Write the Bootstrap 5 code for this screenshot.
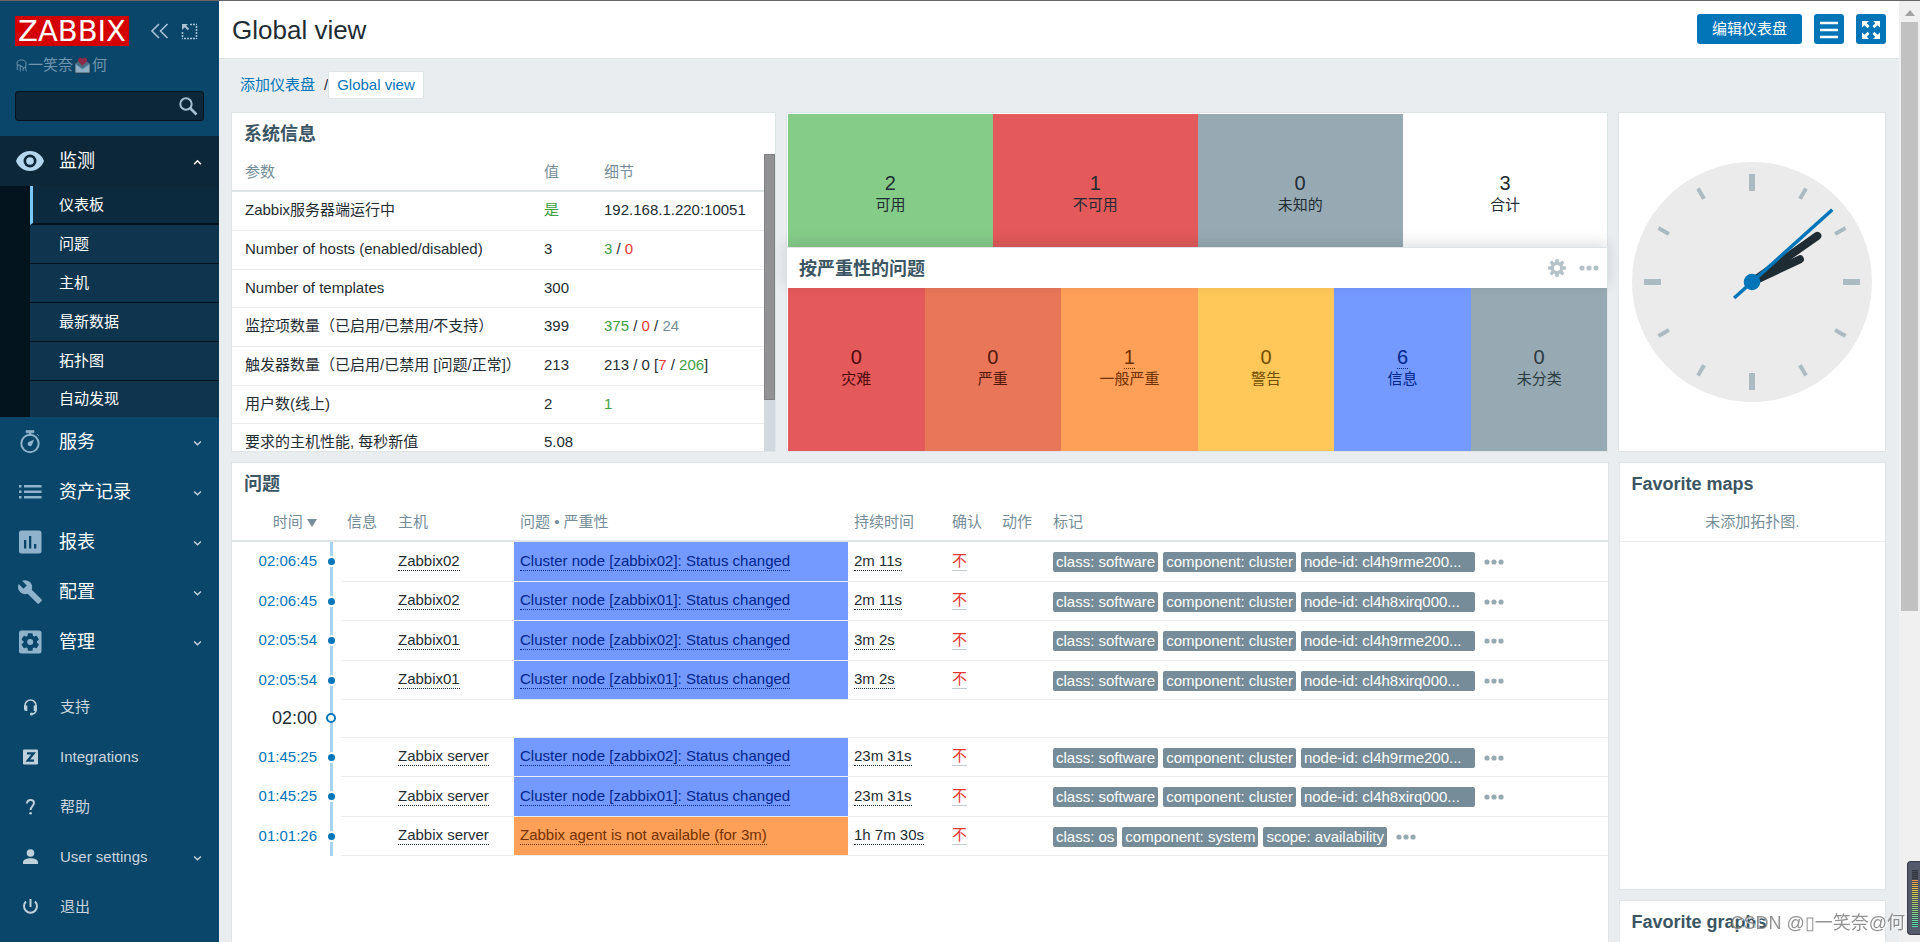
<!DOCTYPE html>
<html lang="zh-CN">
<head>
<meta charset="utf-8">
<meta name="viewport" content="width=device-width, initial-scale=1">
<title>Global view</title>
<link href="https://cdn.jsdelivr.net/npm/bootstrap@5.3.0/dist/css/bootstrap.min.css" rel="stylesheet">
<style>
:root{--ui-blue:#0275b8;--ui-text:#1f2c33;--ui-gray:#768d99;--ui-line:#dfe4e7;--ui-row:#ebeef0}
html,body{height:100%}
body{font-family:"Liberation Sans","Noto Sans CJK SC",sans-serif;font-size:15px;line-height:20px;color:var(--ui-text);background:#e9edf0;overflow:hidden}
a{text-decoration:none;color:var(--ui-blue)}
.frame{height:100vh;border-top:1px solid #666;overflow:hidden}
/* sidebar */
.side{width:219px;background:#0a466a;flex:none}
.side-top{padding:15px 15px 0}
.side-logo{background:#d40000;color:#fff;width:114px;height:30px;font:29px/30px "DejaVu Sans",sans-serif;text-align:center;margin-right:21px}
.side-logo:hover{color:#fff}
.side-name{color:#6f95ae;height:20px;margin-top:9px;padding-left:16px;gap:1px}
.side-find{margin:16px 15px 15px}
.side-search{height:30px;background:#0b2738;border:1px solid #04141f;border-radius:3px;color:#fff;width:100%}
.side-search:focus{background:#0b2738;color:#fff}
.search-btn{right:4px;top:4px;width:22px;height:22px}
.side svg{display:block}
.menu-main a{height:50px;color:#fff;font-size:18px}
.menu-main>li>a.on{background:#0b2738}
.menu-icon{width:59px;padding-left:17px;color:#8fb3cc;flex:none}
.menu-icon.lit{color:#b5d7ee;padding-left:15px}
.chev{margin:2px 17px 0 auto;color:#c5d5e0}
.menu-sub{background:#04141e;padding-left:30px}
.menu-sub a{height:39px;font-size:15px;background:#0f344d;border-bottom:1px solid #04141e;padding-left:29px}
.menu-sub a.on{background:#0b2a3e;border-left:3px solid #7cc7f8;padding-left:26px;border-bottom-width:2px}
.menu-sub li:last-child a{height:36px;border-bottom:0}
.menu-foot{margin:15px 0 0}
.menu-foot a{height:50px;color:#c9d6df}
.menu-foot .menu-icon{width:60px;padding-left:20px;color:#c1d1dc}
/* header */
.top-bar{height:58px;background:#fff;border-bottom:1px solid var(--ui-line);padding:0 13px}
.top-bar h1{font-size:26px;line-height:30px;margin:0}
.top-tools{gap:12px;margin:0 0 1px auto}
.btn-ui{--bs-btn-bg:#0275b8;--bs-btn-color:#fff;--bs-btn-hover-bg:#02659f;--bs-btn-hover-color:#fff;height:30px;border:0;border-radius:3px;padding:0;font-size:15px;line-height:20px}
.btn-edit{width:105px}
.btn-sq{width:30px}
.crumbs{padding:12px 21px 13px}
.crumbs .here{background:#fff;border:1px solid var(--ui-line);border-radius:2px;padding:3px 8px}
.crumbs .sep{margin-left:9px}
/* widgets */
.dash{padding:0 13px 0 12px}
.dash .row{--bs-gutter-x:10px}
.dash .row+.row,.widget+.widget{margin-top:10px}
.widget{background:#fff;border:1px solid var(--ui-line);position:relative}
.h-top{height:340px}
.h-half{height:165px}
.widget-head{height:41px;padding:0 12px;color:#3c5563;font-size:18px;line-height:42px;font-weight:700;margin:0}
.tiles{padding:1px 0 0 1px}
.tiles+.tiles{padding-top:0}
.widget-over{left:-1px;right:-1px;bottom:100%;padding-top:3px;background:#fff;border:1px solid var(--ui-line);border-bottom:0;box-shadow:0 -4px 14px rgba(31,44,51,.15)}
.widget-over h2{font-size:18px;font-weight:700;margin:0}
.tile{flex:1 1 0;min-width:0;text-align:center;padding-bottom:4px}
.tile .num{font-size:20px;line-height:23px}
.tile .num a{color:inherit;border-bottom:1px dotted currentColor}
.c-ok{background:#86cc89}.c-dis{background:#e45959;color:#4e0b0b}.c-high{background:#e97659;color:#52190b}.c-avg{background:#ffa059;color:#733100}.c-warn{background:#ffc859;color:#734d00}.c-info{background:#7499ff;color:#00268e}.c-na{background:#97aab3;color:#2c3a41}
.c-down{background:#e45959;color:var(--ui-text)}.c-unk{background:#97aab3;color:var(--ui-text)}
.green{color:#429e47}.red{color:#e33734}.gray{color:var(--ui-gray)}
.tbl{margin:0;color:inherit;table-layout:fixed;border-collapse:separate;border-spacing:0;width:100%}
.tbl th{font-weight:400;color:var(--ui-gray);padding:0 6px;border-bottom:2px solid var(--ui-line);white-space:nowrap;vertical-align:middle}
.tbl thead tr{height:38px}
.tbl td{padding:0 6px 2px;border-bottom:1px solid var(--ui-row);vertical-align:middle;white-space:nowrap}
.sys-wrap{height:297px;overflow:hidden}
.w-val{width:60px}.w-det{width:166px}
.sys-tbl tbody tr{height:39px}
.sys-tbl tbody tr:nth-child(3n){height:38px}
.sys-tbl th:first-child,.sys-tbl td:first-child{padding-left:13px}
.sys-bar{width:11px;background:#d2dae0;flex:none}
.sys-thumb{height:246px;background:#929294;border:1px solid #808082}
.w-time{width:96px}.w-axis{width:13px}.w-msg{width:51px}.w-host{width:122px}.w-prob{width:334px}.w-dur{width:98px}.w-ack{width:50px}
.prob-tbl tbody tr{height:40px}
.prob-tbl tbody tr:nth-child(even){height:39px}
.prob-tbl tbody tr.hour{height:38px}
.prob-tbl th.t,.prob-tbl td.t{text-align:right;padding-right:11px}
.prob-tbl td.t,.prob-tbl td.ax{border-bottom:0}
.prob-tbl td.tags,.prob-tbl th.tags{padding:0 0 0 7px}
.prob-tbl td.ax{padding:0;position:relative}
.ax-line{position:absolute;left:2px;width:3px;top:0;bottom:0;background:#a8d4ee}
.ax-dot{position:absolute;left:0;top:50%;width:7px;height:7px;margin-top:-4px;border-radius:50%;background:var(--ui-blue);box-shadow:0 0 0 2px #fff}
.hour .ax-dot{left:-2px;width:10px;height:10px;margin-top:-6px;background:#fff;border:2px solid var(--ui-blue);box-shadow:none}
.hour .t{font-size:18px}
.dot-link{color:inherit;border-bottom:1px dotted currentColor;display:inline-block;line-height:18px}
.ack{color:#e33734;border-bottom:1px solid #c0cad0;display:inline-block;line-height:18px}
.tagx{background:var(--ui-gray);color:#fff;border-radius:2px;padding:0 3px;line-height:20px;height:20px;margin-right:5px;display:inline-block;vertical-align:middle;overflow:hidden;text-overflow:ellipsis}
.tag-wide{width:174px}
.more{border:0;background:none;padding:0;margin-left:4px;color:#97aab3;vertical-align:middle}
.more svg{display:block}
.widget-over .more{margin:0;color:#b5c2ca}
.head-tools{gap:12px;margin:0 -4px 3px auto}
.h-map{height:428px}
.h-prob{height:600px}
.empty{height:38px;line-height:36px;text-align:center;color:var(--ui-gray);border-bottom:1px solid var(--ui-row)}
/* right scrollbar and overlays */
.bar{width:21px;background:#f0f0f0;flex:none;padding:0 2px}
.bar-up{height:21px;padding-top:9px}
.bar-thumb{height:589px;background:#c1c1c1}
.meter{position:fixed;right:0;bottom:7px;width:13px;height:74px;background:#565b6c;border:1px solid #3a3d48;border-right:0;border-radius:4px 0 0 4px;padding:8px 2px 7px 4px}
.meter div{height:100%;background:repeating-linear-gradient(to bottom,transparent 0 1px,#454a58 1px 2px),linear-gradient(#33363f 0 16%,#f09050 17%,#e8c840 35%,#a8d070 60%,#50e0b0)}
.stamp{position:fixed;right:15px;bottom:5px;font-size:18px;line-height:28px;color:rgba(110,110,110,.75);text-shadow:1px 1px 0 rgba(255,255,255,.8);white-space:nowrap}
</style>
</head>
<body>
<svg class="d-none" xmlns="http://www.w3.org/2000/svg">
<symbol id="dn" viewBox="0 0 8 6"><path d="M1 1.200l3 3 3-3" fill="none" stroke="currentColor" stroke-width="1.200"/></symbol>
<symbol id="dots" viewBox="0 0 20 6"><g fill="currentColor"><circle cx="3" cy="3" r="2.600"/><circle cx="10" cy="3" r="2.600"/><circle cx="17" cy="3" r="2.600"/></g></symbol>
</svg>
<div class="frame d-flex">
<nav class="side d-flex flex-column">
  <div class="side-top d-flex align-items-center">
    <a href="#" class="side-logo">ZABBIX</a>
    <a href="#" aria-label="收起"><svg width="19" height="16" viewBox="0 0 19 16" fill="none" stroke="#a9c3d4" stroke-width="1.600"><path d="M9 1L2 8l7 7M17.500 1l-7 7 7 7"/></svg></a>
    <a href="#" aria-label="隐藏" class="ms-2 ps-1"><svg width="17" height="17" viewBox="0 0 17 17" fill="none" stroke="#a9c3d4"><path d="M9 1.500h7M15.500 3v13M14 15.500H1M1.500 9v6" stroke-width="1.500" stroke-dasharray="2 1"/><path d="M1 1h6L5.200 2.800l3 3-1.400 1.400-3-3L1 7z" fill="#a9c3d4" stroke="none"/></svg></a>
  </div>
  <div class="side-name d-flex align-items-center">
    <svg width="11" height="13" viewBox="0 0 11 13" fill="none" stroke="currentColor" aria-hidden="true"><path d="M1.500 7C-.3 2.500 2.500 1 5.500 1S11 2.500 9.700 7V10.500c0 1 .5 1.500 1.300 1.500M1.300 6h2.900v6.500M4.200 8C5.500 6.500 7 7 7 8.500v3.500M1.300 7v4M7 9.500l2.700-1.500"/></svg>
    <span>一笑奈</span>
    <svg width="17" height="17" viewBox="0 0 17 17" aria-hidden="true"><path d="M1 6l7.500-5L16 6v10H1z" fill="#4b6c80" stroke="#1d3848"/><path d="M4 2.500C5 0 8 .5 8.500 2.500 9 .5 12 0 13 2.500c.5 2-2.500 4-4.500 6-2-2-5-4-4.500-6z" fill="#8d2a48"/><path d="M1.500 7l7 5 7-5v8.500h-14z" fill="#8fb0c4"/><path d="M1.500 7l7 5 7-5" fill="none" stroke="#5590b8"/></svg>
    <span>何</span>
  </div>
  <div class="side-find position-relative">
    <input type="text" class="form-control side-search" aria-label="搜索">
    <button type="button" class="btn p-0 border-0 position-absolute search-btn" aria-label="搜索"><svg width="20" height="20" viewBox="0 0 20 20" fill="none" stroke="#a3bfd0" stroke-width="2"><circle cx="8" cy="8" r="5.700"/><path d="M12 12l6.500 6.500" stroke-width="2.600"/></svg></button>
  </div>
  <ul class="menu-main list-unstyled mb-0">
    <li><a href="#" class="on d-flex align-items-center"><span class="menu-icon lit"><svg width="30" height="20" viewBox="0 0 30 20"><path d="M15 0C8 0 3 4.500 1 10c2 5.500 7 10 14 10s12-4.500 14-10C27 4.500 22 0 15 0z" fill="currentColor"/><circle cx="15" cy="10" r="6.500" fill="#0b2738"/><circle cx="15" cy="10" r="3.800" fill="currentColor"/></svg></span>监测<svg class="chev" width="9" height="7" viewBox="0 0 8 6"><path d="M1 4.500l3-3 3 3" fill="none" stroke="#fff" stroke-width="1.300"/></svg></a>
      <ul class="menu-sub list-unstyled">
        <li><a href="#" class="on d-flex align-items-center">仪表板</a></li>
        <li><a href="#" class="d-flex align-items-center">问题</a></li>
        <li><a href="#" class="d-flex align-items-center">主机</a></li>
        <li><a href="#" class="d-flex align-items-center">最新数据</a></li>
        <li><a href="#" class="d-flex align-items-center">拓扑图</a></li>
        <li><a href="#" class="d-flex align-items-center">自动发现</a></li>
      </ul></li>
    <li><a href="#" class="d-flex align-items-center"><span class="menu-icon"><svg width="26" height="26" viewBox="0 0 26 26"><circle cx="13" cy="14.500" r="8.700" fill="none" stroke="currentColor" stroke-width="2"/><path d="M9 1.500h8v2.200H9zM12 3h2v3h-2zM20 5l2 2" fill="currentColor" stroke="currentColor" stroke-width=".6"/><path d="M17 10.500l-2 5.500a2.300 2.300 0 1 1-3.300-3z" fill="currentColor"/></svg></span>服务<svg class="chev" width="9" height="7"><use href="#dn"/></svg></a></li>
    <li><a href="#" class="d-flex align-items-center"><span class="menu-icon"><svg width="26" height="26" viewBox="0 0 26 26" fill="currentColor"><path d="M2 6h2.500v2.400H2zM2 11.500h2.500v2.400H2zM2 17h2.500v2.400H2zM7 6h17.500v2.400H7zM7 11.500h17.500v2.400H7zM7 17h17.500v2.400H7z"/></svg></span>资产记录<svg class="chev" width="9" height="7"><use href="#dn"/></svg></a></li>
    <li><a href="#" class="d-flex align-items-center"><span class="menu-icon"><svg width="26" height="26" viewBox="0 0 26 26"><rect x="2" y="1.500" width="22.500" height="23" rx="2.500" fill="currentColor"/><path d="M7 11h2.300v8.500H7zM12 7h2.300v12.500H12zM17 15h2.300v4.500H17z" fill="#0a466a"/></svg></span>报表<svg class="chev" width="9" height="7"><use href="#dn"/></svg></a></li>
    <li><a href="#" class="d-flex align-items-center"><span class="menu-icon"><svg width="26" height="26" viewBox="0 0 24 24" fill="currentColor"><path d="M22.700 19l-9.100-9.100c.9-2.300.4-5-1.500-6.900-2-2-5-2.400-7.400-1.300L9 6 6 9 1.600 4.700C.4 7.100.9 10.100 2.900 12.100c1.900 1.900 4.600 2.400 6.900 1.500l9.100 9.100c.4.4 1 .4 1.400 0l2.300-2.300c.5-.4.5-1.100.1-1.400z"/></svg></span>配置<svg class="chev" width="9" height="7"><use href="#dn"/></svg></a></li>
    <li><a href="#" class="d-flex align-items-center"><span class="menu-icon"><svg width="26" height="26" viewBox="0 0 26 26"><rect x="2" y="1.500" width="22.500" height="23" rx="2.500" fill="currentColor"/><g fill="#0a466a" transform="translate(13.200 13)"><circle r="6.800"/><rect x="-2.500" y="-8.800" width="5" height="17.600" rx=".8"/><rect x="-2.500" y="-8.800" width="5" height="17.600" rx=".8" transform="rotate(60)"/><rect x="-2.500" y="-8.800" width="5" height="17.600" rx=".8" transform="rotate(120)"/></g><circle cx="13.200" cy="13" r="3" fill="currentColor"/></svg></span>管理<svg class="chev" width="9" height="7"><use href="#dn"/></svg></a></li>
  </ul>
  <ul class="menu-foot list-unstyled">
    <li><a href="#" class="d-flex align-items-center"><span class="menu-icon"><svg width="20" height="20" viewBox="0 0 20 20"><path d="M5 11V8.500a5.500 5.500 0 0 1 11 0V13c0 3-2 4-5 4" fill="none" stroke="currentColor" stroke-width="1.600"/><path d="M4 8.500h3.300v5.500H6a2 2 0 0 1-2-2zM17 8.500h-3.300v5.500H15a2 2 0 0 0 2-2z" fill="currentColor"/><circle cx="11.500" cy="17" r="1.600" fill="currentColor"/></svg></span>支持</a></li>
    <li><a href="#" class="d-flex align-items-center"><span class="menu-icon"><svg width="20" height="20" viewBox="0 0 20 20"><rect x="3" y="2.500" width="15" height="15" rx="1" fill="currentColor"/><path d="M7 6.300h6.700L7.700 13.700H14" fill="none" stroke="#0a466a" stroke-width="2.200"/></svg></span>Integrations</a></li>
    <li><a href="#" class="d-flex align-items-center"><span class="menu-icon"><svg width="20" height="20" viewBox="0 0 20 20"><path d="M7 6.500C7 1.800 14 1.800 14 6c0 3-3.400 3.300-3.400 7" fill="none" stroke="currentColor" stroke-width="2"/><circle cx="10.600" cy="16.300" r="1.300" fill="currentColor"/></svg></span>帮助</a></li>
    <li><a href="#" class="d-flex align-items-center"><span class="menu-icon"><svg width="20" height="20" viewBox="0 0 20 20" fill="currentColor"><circle cx="10.500" cy="6" r="3.800"/><path d="M3 17v-2c0-2.500 4-3.800 7.500-3.800S18 12.500 18 15v2z"/></svg></span>User settings<svg class="chev" width="9" height="7"><use href="#dn"/></svg></a></li>
    <li><a href="#" class="d-flex align-items-center"><span class="menu-icon"><svg width="20" height="20" viewBox="0 0 20 20" fill="none" stroke="currentColor" stroke-width="2"><path d="M10.500 2v8"/><path d="M6 4.500a6.500 6.500 0 1 0 9 0"/></svg></span>退出</a></li>
  </ul>
</nav>

<main class="flex-grow-1 overflow-hidden">
  <header class="top-bar d-flex align-items-center">
    <h1 class="fw-normal">Global view</h1>
    <div class="top-tools d-flex">
      <button type="button" class="btn btn-ui btn-edit">编辑仪表盘</button>
      <button type="button" class="btn btn-ui btn-sq" aria-label="菜单"><svg width="20" height="18" viewBox="0 0 20 18"><path d="M1 2h18M1 9h18M1 16h18" stroke="#fff" stroke-width="2.400"/></svg></button>
      <button type="button" class="btn btn-ui btn-sq" aria-label="全屏"><svg width="20" height="20" viewBox="0 0 20 20" fill="#fff"><path id="arrow" d="M1 1h7L5.700 3.300 8.500 6.100 6.600 8.200 3.500 5.200 1 7.500z"/><use href="#arrow" transform="matrix(-1 0 0 1 20 0)"/><use href="#arrow" transform="matrix(1 0 0 -1 0 20)"/><use href="#arrow" transform="matrix(-1 0 0 -1 20 20)"/></svg></button>
    </div>
  </header>
  <div class="crumbs d-flex align-items-center">
    <a href="#">添加仪表盘</a><span class="sep">/</span><a href="#" class="here">Global view</a>
  </div>

  <div class="dash">
    <div class="row">
      <div class="col-4">
        <section class="widget h-top">
          <h2 class="widget-head">系统信息</h2>
          <div class="d-flex sys-wrap">
            <div class="flex-grow-1">
              <table class="tbl sys-tbl">
                <colgroup><col><col class="w-val"><col class="w-det"></colgroup>
                <thead><tr><th>参数</th><th>值</th><th>细节</th></tr></thead>
                <tbody>
                  <tr><td>Zabbix服务器端运行中</td><td class="green">是</td><td>192.168.1.220:10051</td></tr>
                  <tr><td>Number of hosts (enabled/disabled)</td><td>3</td><td><span class="green">3</span> / <span class="red">0</span></td></tr>
                  <tr><td>Number of templates</td><td>300</td><td></td></tr>
                  <tr><td>监控项数量（已启用/已禁用/不支持）</td><td>399</td><td><span class="green">375</span> / <span class="red">0</span> / <span class="gray">24</span></td></tr>
                  <tr><td>触发器数量（已启用/已禁用 [问题/正常]）</td><td>213</td><td>213 / 0 [<span class="red">7</span> / <span class="green">206</span>]</td></tr>
                  <tr><td>用户数(线上)</td><td>2</td><td class="green">1</td></tr>
                  <tr><td>要求的主机性能, 每秒新值</td><td>5.08</td><td></td></tr>
                </tbody>
              </table>
            </div>
            <div class="sys-bar"><div class="sys-thumb"></div></div>
          </div>
        </section>
      </div>
      <div class="col-6">
        <section class="widget tiles h-half d-flex">
          <div class="tile c-ok d-flex flex-column justify-content-center"><div class="num">2</div><div>可用</div></div>
          <div class="tile c-down d-flex flex-column justify-content-center"><div class="num">1</div><div>不可用</div></div>
          <div class="tile c-unk d-flex flex-column justify-content-center"><div class="num">0</div><div>未知的</div></div>
          <div class="tile d-flex flex-column justify-content-center"><div class="num">3</div><div>合计</div></div>
        </section>
        <section class="widget tiles h-half d-flex">
          <div class="widget-over widget-head position-absolute d-flex align-items-center">
            <h2>按严重性的问题</h2>
            <div class="head-tools d-flex align-items-center">
            <button type="button" class="more" aria-label="设置"><svg width="20" height="20" viewBox="-10 -10 20 20"><g fill="currentColor"><path id="tooth" d="M-1.500-9h3l.6 4h-4.200z"/><use href="#tooth" transform="rotate(45)"/><use href="#tooth" transform="rotate(90)"/><use href="#tooth" transform="rotate(135)"/><use href="#tooth" transform="rotate(180)"/><use href="#tooth" transform="rotate(225)"/><use href="#tooth" transform="rotate(270)"/><use href="#tooth" transform="rotate(315)"/></g><circle r="4.600" fill="none" stroke="currentColor" stroke-width="3.200"/></svg></button>
            <button type="button" class="more" aria-label="更多"><svg width="20" height="6"><use href="#dots"/></svg></button>
            </div>
          </div>
          <div class="tile c-dis d-flex flex-column justify-content-center"><div class="num">0</div><div>灾难</div></div>
          <div class="tile c-high d-flex flex-column justify-content-center"><div class="num">0</div><div>严重</div></div>
          <div class="tile c-avg d-flex flex-column justify-content-center"><div class="num"><a href="#">1</a></div><div>一般严重</div></div>
          <div class="tile c-warn d-flex flex-column justify-content-center"><div class="num">0</div><div>警告</div></div>
          <div class="tile c-info d-flex flex-column justify-content-center"><div class="num"><a href="#">6</a></div><div>信息</div></div>
          <div class="tile c-na d-flex flex-column justify-content-center"><div class="num">0</div><div>未分类</div></div>
        </section>
      </div>
      <div class="col-2">
        <section class="widget h-top d-flex align-items-center justify-content-center">
          <svg width="240" height="240" viewBox="-120 -120 240 240" role="img" aria-label="时钟">
            <circle r="120" fill="#ebebeb"/>
            <g fill="#acbbc2">
              <rect id="big" x="-3" y="-108" width="6" height="17"/><use href="#big" transform="rotate(90)"/><use href="#big" transform="rotate(180)"/><use href="#big" transform="rotate(270)"/>
              <rect id="sml" x="-2" y="-108" width="4" height="12" transform="rotate(30)"/><use href="#sml" transform="rotate(30)"/><use href="#sml" transform="rotate(90)"/><use href="#sml" transform="rotate(120)"/><use href="#sml" transform="rotate(180)"/><use href="#sml" transform="rotate(210)"/><use href="#sml" transform="rotate(270)"/><use href="#sml" transform="rotate(300)"/>
            </g>
            <g stroke="#1f2c33" stroke-width="8" stroke-linecap="round"><path d="M0 0V-53" transform="rotate(64.600)"/><path d="M0 0V-80" transform="rotate(54.800)"/></g>
            <path d="M0 24V-108" stroke="#0275b8" stroke-width="3.500" transform="rotate(48)"/>
            <circle r="8.300" fill="#0275b8"/>
          </svg>
        </section>
      </div>
    </div>
    <div class="row">
      <div class="col-10">
        <section class="widget h-prob">
          <h2 class="widget-head">问题</h2>
          <table class="tbl prob-tbl">
            <colgroup><col class="w-time"><col class="w-axis"><col class="w-msg"><col class="w-host"><col class="w-prob"><col class="w-dur"><col class="w-ack"><col class="w-ack"><col></colgroup>
            <thead><tr><th class="t">时间 <svg width="10" height="8" viewBox="0 0 10 8"><path d="M0 0h10L5 8z" fill="currentColor"/></svg></th><th></th><th>信息</th><th>主机</th><th>问题 • 严重性</th><th>持续时间</th><th>确认</th><th>动作</th><th class="tags">标记</th></tr></thead>
            <tbody id="rows"></tbody>
          </table>
        </section>
      </div>
      <div class="col-2">
        <section class="widget h-map"><h2 class="widget-head">Favorite maps</h2><div class="empty">未添加拓扑图.</div></section>
        <section class="widget h-half"><h2 class="widget-head">Favorite graphs</h2></section>
      </div>
    </div>
  </div>
</main>
<div class="bar"><div class="bar-up d-flex justify-content-center"><svg width="10" height="6"><path d="M0 6l5-6 5 6z" fill="#a3a3a3"/></svg></div><div class="bar-thumb"></div></div>
</div>
<div class="stamp">CSDN @▯一笑奈@何</div>
<div class="meter"><div></div></div>
<script>
const cl = n => ['Cluster node [zabbix0' + n + ']: Status changed', 'c-info', ['class: software', 'component: cluster', n === 2 ? 'node-id: cl4h9rme200...' : 'node-id: cl4h8xirq000...']];
const agent = ['Zabbix agent is not available (for 3m)', 'c-avg', ['class: os', 'component: system', 'scope: availability']];
const data = [
  ['02:06:45', 'Zabbix02', cl(2), '2m 11s'], ['02:06:45', 'Zabbix02', cl(1), '2m 11s'],
  ['02:05:54', 'Zabbix01', cl(2), '3m 2s'], ['02:05:54', 'Zabbix01', cl(1), '3m 2s'],
  ['02:00'],
  ['01:45:25', 'Zabbix server', cl(2), '23m 31s'], ['01:45:25', 'Zabbix server', cl(1), '23m 31s'],
  ['01:01:26', 'Zabbix server', agent, '1h 7m 30s']
];
const axis = '<td class="ax"><span class="ax-line"></span><span class="ax-dot"></span></td>';
document.getElementById('rows').innerHTML = data.map(([t, host, p, dur]) => !host
  ? `<tr class="hour"><td class="t">${t}</td>${axis}<td colspan="7"></td></tr>`
  : `<tr><td class="t"><a href="#">${t}</a></td>${axis}<td></td><td><a href="#" class="dot-link">${host}</a></td>
     <td class="${p[1]}"><a href="#" class="dot-link">${p[0]}</a></td><td><a href="#" class="dot-link">${dur}</a></td>
     <td><a href="#" class="ack">不</a></td><td></td>
     <td class="tags">${p[2].map(x => `<span class="tagx${x.startsWith('node') ? ' tag-wide' : ''}">${x}</span>`).join('')}<button type="button" class="more" aria-label="更多"><svg width="20" height="6"><use href="#dots"/></svg></button></td></tr>`).join('');
</script>
<script src="https://cdn.jsdelivr.net/npm/bootstrap@5.3.0/dist/js/bootstrap.bundle.min.js"></script>
</body>
</html>
